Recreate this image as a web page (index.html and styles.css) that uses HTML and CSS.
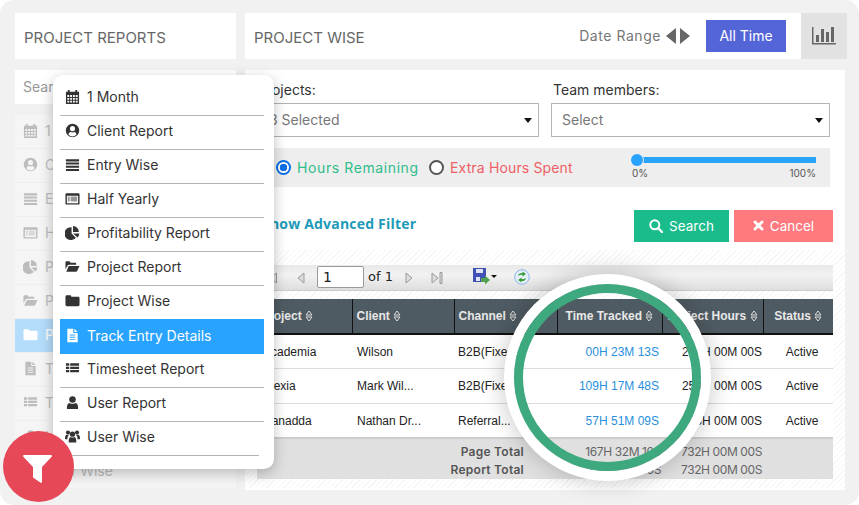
FILE: index.html
```html
<!doctype html>
<html lang="en">
<head>
  <meta charset="utf-8" />
  <title>Project Reports</title>
  <link rel="stylesheet" href="styles.css">
</head>
<body>

  <svg class="defs" width="0" height="0">
    <symbol id="i-calendar" viewBox="0 0 16 16"><path fill-rule="evenodd" d="M1 3h2V1h2v2h6V1h2v2h2v13H1zM2.500 6.500v2h2v-2zM5.500 6.500v2h2v-2zM8.500 6.500v2h2v-2zM11.500 6.500v2h2v-2zM2.500 9.500v2h2v-2zM5.500 9.500v2h2v-2zM8.500 9.500v2h2v-2zM11.500 9.500v2h2v-2zM2.500 12.500v2h2v-2zM5.500 12.500v2h2v-2zM8.500 12.500v2h2v-2zM11.500 12.500v2h2v-2z"/></symbol>
    <symbol id="i-usercircle" viewBox="0 0 16 16"><path fill-rule="evenodd" d="M8 .8a7.200 7.200 0 1 1 0 14.400A7.200 7.200 0 0 1 8 .8zM8 3.300a2.700 2.700 0 1 0 0 5.400 2.700 2.700 0 0 0 0-5.400zM3.700 12.300A5.500 5.500 0 0 0 12.300 12.300C12 10.800 11 9.900 10 9.700 8.800 10.400 7.200 10.400 6 9.700 5 9.900 4 10.800 3.700 12.300z"/></symbol>
    <symbol id="i-bars" viewBox="0 0 16 16"><path d="M1 2.500h14v2.200H1zM1 5.900h14v2.200H1zM1 9.300h14v2.200H1zM1 12.700h14v2.200H1z"/></symbol>
    <symbol id="i-listalt" viewBox="0 0 16 16"><path fill-rule="evenodd" d="M1.500 2.500h13a1 1 0 0 1 1 1v10a1 1 0 0 1-1 1h-13a1 1 0 0 1-1-1v-10a1 1 0 0 1 1-1zM2 5v8h12V5zM3 6h2v1H3zM6 6h7v1H6zM3 8h2v1H3zM6 8h7v1H6zM3 10h2v1H3zM6 10h7v1H6z"/></symbol>
    <symbol id="i-pie" viewBox="0 0 16 16"><path d="M7 2.500V9l4.500 4.500A6.800 6.800 0 1 1 7 2.500zM8.500 1a6.500 6.500 0 0 1 6.300 6.500H8.500zM8.800 9h6.500a6.500 6.500 0 0 1-2 4.300z"/></symbol>
    <symbol id="i-folderopen" viewBox="0 0 16 16"><path d="M.5 11V3.500a1 1 0 0 1 1-1h3.300l1.200 1.500h5a1 1 0 0 1 1 1V6H4.500a2 2 0 0 0-1.700 1zM1.300 13.500 4 7.500h11.500L12.800 13a1 1 0 0 1-.9.500z"/></symbol>
    <symbol id="i-folder" viewBox="0 0 16 16"><path d="M2 2.500h3.500a1.200 1.200 0 0 1 1.200 1.200V4H14a1.500 1.500 0 0 1 1.500 1.500v7A1.500 1.500 0 0 1 14 14H2a1.500 1.500 0 0 1-1.500-1.500v-8.500A1.500 1.500 0 0 1 2 2.500z"/></symbol>
    <symbol id="i-file" viewBox="0 0 16 16"><path fill-rule="evenodd" d="M2.500.8h6.300v4.500h4.700v10H2.500zM10 .8l3.500 3.400H10zM5 7v1h6V7zM5 9.300v1h6v-1zM5 11.600v1h6v-1z"/></symbol>
    <symbol id="i-thlist" viewBox="0 0 16 16"><path d="M1 2.500h3.500v2.500H1zM5.500 2.500H15v2.500H5.500zM1 6h3.500v2.500H1zM5.500 6H15v2.500H5.500zM1 9.500h3.500V12H1zM5.500 9.500H15V12H5.500z"/></symbol>
    <symbol id="i-user" viewBox="0 0 16 16"><circle cx="8" cy="4.700" r="3.500"/><path d="M3 15a1 1 0 0 1-1-1c0-3 .7-5.300 2.800-5.600 1.900 1.300 4.500 1.300 6.400 0C13.300 8.700 14 11 14 14a1 1 0 0 1-1 1z"/></symbol>
    <symbol id="i-users" viewBox="0 0 16 16"><circle cx="8" cy="5.500" r="2.800"/><circle cx="3.200" cy="3.800" r="2.200"/><circle cx="12.800" cy="3.800" r="2.200"/><path d="M4 14.500c-.3-3.800.6-5.500 1.800-6 1.400.8 3 .8 4.400 0 1.200.5 2.100 2.200 1.800 6zM0 10.300c0-2.500.6-3.900 1.600-4.200.8.500 1.700.6 2.500.3-.3.700-.6 1-1 1.500-.5.700-.4 2-.3 3C1.500 11 0 10.800 0 10.300zM16 10.300c0-2.500-.6-3.900-1.600-4.200-.8.500-1.700.6-2.500.3.300.7.600 1 1 1.500.5.700.4 2 .3 3 1.300.1 2.800-.1 2.800-.6z"/></symbol>
    <symbol id="i-sort" viewBox="0 0 8 12"><path fill="none" stroke="currentColor" d="M4 1 7 5H1zM4 11 7 7H1z"/></symbol>
  </svg>

  <div class="app">

    <aside class="side">
      <div class="head-box">PROJECT REPORTS</div>
      <div class="side-search">Search</div>
      <ul class="side-list">
        <li><svg class="ico"><use href="#i-calendar"/></svg>1 Month</li>
        <li><svg class="ico"><use href="#i-usercircle"/></svg>Client Report</li>
        <li><svg class="ico"><use href="#i-bars"/></svg>Entry Wise</li>
        <li><svg class="ico"><use href="#i-listalt"/></svg>Half Yearly</li>
        <li><svg class="ico"><use href="#i-pie"/></svg>Profitability Report</li>
        <li><svg class="ico"><use href="#i-folderopen"/></svg>Project Report</li>
        <li class="on"><svg class="ico"><use href="#i-folder"/></svg>Project Wise</li>
        <li><svg class="ico"><use href="#i-file"/></svg>Track Entry Details</li>
        <li><svg class="ico"><use href="#i-thlist"/></svg>Timesheet Report</li>
        <li><svg class="ico"><use href="#i-user"/></svg>User Report</li>
        <li><svg class="ico"><use href="#i-users"/></svg>User Wise</li>
      </ul>
    </aside>

    <main class="main">
      <div class="topbar">
        <div class="topbar-title">PROJECT WISE</div>
        <span class="range-label">Date Range</span>
        <span class="range-arrow left"></span>
        <span class="range-arrow right"></span>
        <button class="all-time">All Time</button>
        <div class="chart-btn">
          <svg width="24" height="18" viewBox="0 0 24 18"><path fill="#666" d="M0 0h1.500v16H24v1.500H0zM4 8h3v7H4zM9 2h3v13H9zM14 5h3v10h-3zM19 0h3v15h-3z"/></svg>
        </div>
      </div>

      <div class="card">
        <div class="filters">
          <div class="field">
            <label>Projects:</label>
            <div class="select">3 Selected<span class="caret"></span></div>
          </div>
          <div class="field">
            <label class="team-label">Team members:</label>
            <div class="select">Select<span class="caret"></span></div>
          </div>
        </div>

        <div class="band">
          <span class="radio checked"></span><span class="txt-green">Hours Remaining</span>
          <span class="radio"></span><span class="txt-red">Extra Hours Spent</span>
          <div class="slider">
            <div class="track"><span class="knob"></span></div>
            <div class="scale"><span>0%</span><span>100%</span></div>
          </div>
        </div>

        <div class="action-row">
          <a class="adv-link">Show Advanced Filter</a>
          <div class="btns">
            <button class="btn green">
              <svg width="14" height="14" viewBox="0 0 14 14"><circle cx="5.800" cy="5.800" r="4.500" fill="none" stroke="#fff" stroke-width="2"/><path d="M9 9l4 4" stroke="#fff" stroke-width="2.400" stroke-linecap="round"/></svg>
              Search
            </button>
            <button class="btn pink">
              <svg width="11" height="11" viewBox="0 0 11 11"><path d="M2 2l7 7M9 2l-7 7" stroke="#fff" stroke-width="3" stroke-linecap="round"/></svg>
              Cancel
            </button>
          </div>
        </div>

        <div class="report">
          <div class="toolbar">
            <svg class="tb-icon first" width="12" height="12" viewBox="0 0 12 12"><path fill="#ddd" stroke="#999" d="M2.500.5v11M10.500 1v10l-6-5z"/></svg>
            <svg class="tb-icon prev" width="8" height="12" viewBox="0 0 8 12"><path fill="#ddd" stroke="#999" d="M7 1v10L1 6z"/></svg>
            <span class="page-input">1</span>
            <span class="of">of 1</span>
            <svg class="tb-icon next" width="8" height="12" viewBox="0 0 8 12"><path fill="#ddd" stroke="#999" d="M1 1v10l6-5z"/></svg>
            <svg class="tb-icon last" width="12" height="12" viewBox="0 0 12 12"><path fill="#ddd" stroke="#999" d="M1 1v10l6-5zM9 .5h2v11H9z"/></svg>
            <svg class="save" width="18" height="17" viewBox="0 0 18 17"><path fill="#3f51b5" d="M0 0h13v10H8v4H0z"/><path fill="#dfe3f5" d="M3 1h7v4H3zM3 9h4v4H3z"/><path fill="#4fa04f" d="M8 10h4V7.500l5 4.500-5 4.500V14H8z"/></svg>
            <span class="mini-caret"></span>
            <svg class="refresh" width="16" height="16" viewBox="0 0 16 16"><circle cx="8" cy="8" r="7.300" fill="#e6f0fb" stroke="#8ab4e8"/><path fill="#3b9c3b" d="M4 7c.3-2.300 2.300-3.500 4.500-3V2.500L12 5 8.500 7.500V6C7 5.600 5.500 6 4 7zM12 9c-.3 2.300-2.300 3.500-4.500 3v1.500L4 11l3.500-2.500V10c1.500.4 3 0 4.500-1z"/></svg>
          </div>

          <table class="grid">
            <colgroup>
              <col class="c-project"><col class="c-client"><col class="c-channel"><col class="c-time"><col class="c-hours"><col class="c-status">
            </colgroup>
            <thead>
              <tr>
                <th>Project <svg class="sort"><use href="#i-sort"/></svg></th>
                <th>Client <svg class="sort"><use href="#i-sort"/></svg></th>
                <th>Channel <svg class="sort"><use href="#i-sort"/></svg></th>
                <th class="mid">Time Tracked <svg class="sort"><use href="#i-sort"/></svg></th>
                <th class="mid">Project Hours <svg class="sort"><use href="#i-sort"/></svg></th>
                <th class="mid">Status <svg class="sort"><use href="#i-sort"/></svg></th>
              </tr>
            </thead>
            <tbody>
              <tr class="row-a">
                <td>Academia</td><td>Wilson</td><td>B2B(Fixed)</td>
                <td class="time">00H 23M 13S</td><td class="num">244H 00M 00S</td><td class="mid">Active</td>
              </tr>
              <tr>
                <td>Alexia</td><td>Mark Wil...</td><td>B2B(Fixed)</td>
                <td class="time">109H 17M 48S</td><td class="num">250H 00M 00S</td><td class="mid">Active</td>
              </tr>
              <tr class="row-c">
                <td>Canadda</td><td>Nathan Dr...</td><td>Referral...</td>
                <td class="time">57H 51M 09S</td><td class="num">238H 00M 00S</td><td class="mid">Active</td>
              </tr>
            </tbody>
            <tfoot>
              <tr class="first-total">
                <td colspan="3" class="t-label">Page Total</td><td class="t-num">167H 32M 10S</td><td class="t-num">732H 00M 00S</td><td></td>
              </tr>
              <tr>
                <td colspan="3" class="t-label">Report Total</td><td class="t-num">167H 32M 10S</td><td class="t-num">732H 00M 00S</td><td></td>
              </tr>
            </tfoot>
          </table>
        </div>
      </div>
    </main>

    <!-- dropdown over the sidebar -->
    <ul class="popup">
      <li><svg class="ico"><use href="#i-calendar"/></svg>1 Month</li>
      <li><svg class="ico"><use href="#i-usercircle"/></svg>Client Report</li>
      <li><svg class="ico"><use href="#i-bars"/></svg>Entry Wise</li>
      <li><svg class="ico"><use href="#i-listalt"/></svg>Half Yearly</li>
      <li><svg class="ico"><use href="#i-pie"/></svg>Profitability Report</li>
      <li><svg class="ico"><use href="#i-folderopen"/></svg>Project Report</li>
      <li><svg class="ico"><use href="#i-folder"/></svg>Project Wise</li>
      <li class="active"><svg class="ico"><use href="#i-file"/></svg>Track Entry Details</li>
      <li><svg class="ico"><use href="#i-thlist"/></svg>Timesheet Report</li>
      <li><svg class="ico"><use href="#i-user"/></svg>User Report</li>
      <li class="last"><svg class="ico"><use href="#i-users"/></svg>User Wise</li>
    </ul>

    <div class="fab">
      <svg width="29" height="28" viewBox="0 0 29 28"><path fill="#fff" d="M1 0h27a1 1 0 0 1 .7 1.700L19 12v15l-1 1-8-5.500V12L.3 1.700A1 1 0 0 1 1 0z"/></svg>
    </div>

    <div class="lens"></div>
  </div>

</body>
</html>
```

FILE: styles.css
```css
:root{
  --ui: Inter, "Noto Sans", Arial, sans-serif;
  --grid: "Liberation Sans", Arial, sans-serif;
  --blue: #28a3ff;
}
*{ box-sizing:border-box; }
body{
  margin:0;
  background:#fff;
  font-family:var(--ui);
}
.defs{ position:absolute; }

.app{
  position:relative;
  width:859px;
  height:505px;
  overflow:hidden;
  background:#f1f1f1;
  border-radius:14px;
  padding:13px 12px 0 15px;
  display:grid;
  grid-template-columns:221px 602px;
  column-gap:9px;
  align-items:start;
}

/* sidebar */
.head-box{
  height:46px;
  background:#fff;
  padding:2px 0 0 9px;
  display:flex;
  align-items:center;
  color:#666;
  font-size:15px;
}
.side-search{
  height:34px;
  margin-top:11px;
  background:#fff;
  padding:0 0 2px 8px;
  display:flex;
  align-items:center;
  font-size:14px;
  color:#999;
}
.side-list{
  list-style:none;
  margin:11px 0 0;
  padding:0;
}
.side-list li{
  height:34px;
  display:flex;
  align-items:center;
  padding:0 0 3px 8px;
  background:#f5f5f5;
  border-bottom:1px solid #efefef;
  font-size:14px;
  color:#bdbdbd;
}
.side-list li.on{ background:#b4dcfb; color:#fff; }
.ico{
  width:15px;
  height:15px;
  margin-right:7px;
  fill:currentColor;
  flex:none;
}

/* top bar */
.topbar{
  height:46px;
  background:#fff;
  display:flex;
  align-items:center;
  padding-left:9px;
  color:#666;
}
.topbar-title{ font-size:15px; flex:1; padding-top:2px; }
.range-label{ font-size:14px; color:#777; margin-right:5px; letter-spacing:.55px; padding-bottom:1px; }
.range-arrow{
  width:0;
  height:0;
  border-top:8px solid transparent;
  border-bottom:8px solid transparent;
}
.range-arrow.left{ border-right:10px solid #666; margin-right:4px; }
.range-arrow.right{ border-left:10px solid #666; margin-right:16px; }
.all-time{
  width:80px;
  height:32px;
  border:0;
  padding-bottom:2px;
  background:#5465d8;
  color:#fff;
  font:14px var(--ui);
  margin-right:15px;
}
.chart-btn{
  width:46px;
  height:46px;
  background:#e2e2e2;
  display:flex;
  align-items:center;
  justify-content:center;
}

/* form card */
.card{
  width:600px;
  height:420px;
  margin-top:11px;
  background:#fff;
}
.filters{
  display:grid;
  grid-template-columns:281px 279px;
  column-gap:12px;
  padding:11px 0 0 13px;
}
.field label{
  display:block;
  height:22px;
  font-size:14px;
  color:#333;
}
.team-label{ padding-left:2px; }
.select{
  position:relative;
  height:34px;
  border:1px solid #b4b4b4;
  padding:0 0 2px 10px;
  display:flex;
  align-items:center;
  font-size:14px;
  color:#777;
}
.caret{
  position:absolute;
  right:6px;
  top:14px;
  border-left:4.500px solid transparent;
  border-right:4.500px solid transparent;
  border-top:5px solid #111;
}
.band{
  width:572px;
  height:39px;
  margin:11px 0 0 13px;
  background:#eee;
  display:flex;
  align-items:center;
  padding-left:18px;
  font-size:14px;
}
.radio{
  width:15px;
  height:15px;
  border:2px solid #555;
  border-radius:50%;
  margin-right:7px;
  background:#fff;
}
.radio.checked{
  border-color:#0a6fe8;
  background:radial-gradient(circle, #0a6fe8 0 3.500px, #fff 4px);
}
.txt-green{ color:#2ebd8b; width:132px; letter-spacing:.6px; margin-left:-1px; }
.txt-red{ color:#ee5f66; width:182px; letter-spacing:.15px; margin-left:-1px; }
.slider{ width:184px; }
.track{
  position:relative;
  height:6px;
  background:var(--blue);
}
.knob{
  position:absolute;
  left:-1px;
  top:-3px;
  width:12px;
  height:12px;
  border-radius:50%;
  background:var(--blue);
  box-shadow:0 0 0 1px #eee;
}
.scale{
  display:flex;
  justify-content:space-between;
  margin-top:4px;
  font-size:10px;
  color:#555;
}

.action-row{
  display:flex;
  justify-content:space-between;
  align-items:center;
  height:32px;
  margin-top:23px;
  padding:0 12px 0 17px;
}
.adv-link{
  font:bold 14px "Open Sans", sans-serif;
  letter-spacing:.2px;
  color:#1c9ab8;
  margin-top:-5px;
}
.btns{ display:flex; gap:5px; }
.btn{
  height:32px;
  border:0;
  padding:0 0 1px;
  color:#fff;
  font:13.500px var(--ui);
  display:flex;
  align-items:center;
  justify-content:center;
  gap:6px;
}
.btn.green{ width:95px; background:#1abc8c; }
.btn.pink{ width:99px; background:#ff7a7e; }

/* report area */
.report{
  height:238px;
  margin-top:8px;
  padding:15px 12px 0;
  background:repeating-linear-gradient(135deg, #fff 0 3px, #f6f6f6 3px 4px);
}
.toolbar{
  height:26px;
  background:linear-gradient(#e8e8e8, #f2f2f2 40%, #dedede);
  border-bottom:1px solid #ccc;
  position:relative;
}
.tb-icon{ position:absolute; top:7px; }
.tb-icon.first{ left:9px; }
.tb-icon.prev{ left:40px; }
.tb-icon.next{ left:148px; }
.tb-icon.last{ left:174px; }
.page-input{
  position:absolute;
  left:60px;
  top:1px;
  width:47px;
  height:22px;
  padding-left:5px;
  background:#fff;
  border:1px solid #999;
  border-radius:2px;
  font:14px/20px "DejaVu Sans", sans-serif;
  color:#222;
}
.of{
  position:absolute;
  left:111px;
  top:3px;
  font:13px/18px "DejaVu Sans", sans-serif;
  color:#222;
}
.save{ position:absolute; left:216px; top:3px; }
.mini-caret{
  position:absolute;
  left:234px;
  top:10px;
  border-left:3px solid transparent;
  border-right:3px solid transparent;
  border-top:3px solid #111;
}
.refresh{ position:absolute; left:257px; top:4px; }

.grid{
  width:576px;
  margin-top:8px;
  border-collapse:collapse;
  table-layout:fixed;
  background:#fff;
  font:12px var(--grid);
}
.c-project{ width:95px; }
.c-client{ width:102px; }
.c-channel{ width:103px; }
.c-time{ width:105px; }
.c-hours{ width:101px; }
.c-status{ width:70px; }
.grid th{
  height:35px;
  background:#4f5b62;
  color:#e8e8e8;
  font-weight:bold;
  text-align:left;
  padding:0 0 0 4px;
  border-left:1px solid #111;
  border-bottom:2px solid #111;
  white-space:nowrap;
}
.grid th:first-child{ border-left:0; }
.grid th.mid{ text-align:center; padding-left:0; }
.sort{
  width:8px;
  height:12px;
  vertical-align:-2px;
  color:#ddd;
}
.grid tbody td{
  height:35px;
  padding:0 0 0 4px;
  border-bottom:1px solid #ddd;
  color:#222;
  white-space:nowrap;
}
.grid tbody .row-a td{ height:34px; padding-top:2px; }
.grid tbody .row-c td{ padding-top:2px; }
.grid tbody td:first-child{ padding-left:6px; }
.grid tbody td:nth-child(2){ padding-left:5px; }
.grid td.time{ text-align:right; padding-right:3px; color:#2a8fdc; }
.grid td.num{ text-align:right; padding-right:1px; }
.grid td.mid{ text-align:center; padding-left:8px; }
.grid tfoot td{
  background:#e0e0e0;
  height:18px;
  font:12px/16px var(--ui);
  color:#666;
  white-space:nowrap;
}
.grid tfoot .first-total td{ border-top:2px solid #ccc; height:23px; padding-top:4px; }
.grid td.t-label{ text-align:right; padding-right:33px; font-weight:600; letter-spacing:.25px; color:#555; }
.grid td.t-num{ text-align:right; padding-right:1px; letter-spacing:-.4px; }

/* popup menu */
.popup{
  position:absolute;
  left:53px;
  top:75px;
  width:221px;
  height:394px;
  margin:0;
  padding:7px 10px 0 7px;
  list-style:none;
  background:#fff;
  border-radius:10px;
  box-shadow:0 4px 14px rgba(0,0,0,.25);
}
.popup li{
  height:34px;
  display:flex;
  align-items:center;
  padding:0 0 5px 5px;
  border-bottom:1px solid #b5b5b5;
  font-size:14px;
  color:#333;
}
.popup li.active{
  height:35px;
  margin-top:-1px;
  padding-bottom:2px;
  background:var(--blue);
  color:#fff;
  border-bottom:0;
}
.popup li.last{ margin-right:5px; }

.fab{
  position:absolute;
  left:3px;
  top:431px;
  width:71px;
  height:71px;
  padding:5px 2px 0 0;
  border-radius:50%;
  background:#e64858;
  display:flex;
  align-items:center;
  justify-content:center;
}

/* magnifier ring over the table */
.lens{
  position:absolute;
  left:514px;
  top:284px;
  width:187px;
  height:187px;
  border:9px solid #3ea87e;
  border-radius:50%;
  box-shadow:0 0 0 10px #fff, 0 0 22px 12px rgba(0,0,0,.2);
}
```
